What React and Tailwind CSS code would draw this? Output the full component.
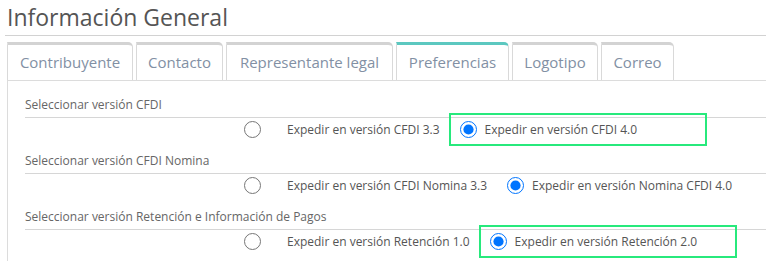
import React from "react";

function Radio({ checked }) {
  return (
    <input
      type="radio"
      checked={checked}
      readOnly
      className="m-0 h-[17px] w-[17px] shrink-0"
    />
  );
}

function Section({ label, opt1, opt2, second, boxed, first }) {
  return (
    <div className={first ? "" : "mt-[11px]"}>
      <div className="border-b border-[#d6d6d6] pb-[4px] text-[12px] leading-[17px] text-[#666]">
        {label}
      </div>
      <div className="flex h-[23px] items-center text-[12px] text-[#555]">
        <div className="ml-[219px] mr-[26px] flex">
          <Radio checked={false} />
        </div>
        <span className="mr-[20px] whitespace-nowrap">{opt1}</span>
        <div className="relative flex items-center">
          {boxed && (
            <div className="pointer-events-none absolute left-[-11px] top-[-8px] h-[33px] w-[258px] border-2 border-[#27e97c]" />
          )}
          <div className="mr-[8px] flex">
            <Radio checked={true} />
          </div>
          <span className="whitespace-nowrap">{second}</span>
        </div>
      </div>
    </div>
  );
}

const tabs = [
  { name: "Contribuyente", w: "w-[126px]" },
  { name: "Contacto", w: "w-[87px]" },
  { name: "Representante legal", w: "w-[167px]" },
  { name: "Preferencias", w: "w-[113px]", active: true },
  { name: "Logotipo", w: "w-[86px]" },
  { name: "Correo", w: "w-[73px]" },
];

export default function App() {
  return (
    <div
      className="relative h-[261px] w-[766px] overflow-hidden bg-white"
      style={{ fontFamily: "'Open Sans', 'DejaVu Sans', sans-serif" }}
    >
      <div className="h-[35px] pl-[7px] pt-[1px] text-[23px] leading-[32px] text-[#555]">
        Información General
      </div>
      <div className="ml-[5px] border-t border-[#d2d2d2]" />
      <div className="ml-[7px] mt-[6px] flex gap-[3px] border-b border-[#dcdcdc]">
        {tabs.map((t) => (
          <div
            key={t.name}
            className={`${t.w} flex h-[38px] items-center justify-center rounded-tr-[5px] border-x border-t-[3px] border-x-[#d9d9d9] text-[15px] text-[#8290a4] ${
              t.active ? "border-t-[#5cc8c0]" : "border-t-[#d3d3d3]"
            }`}
          >
            <span className="pb-[1px]">{t.name}</span>
          </div>
        ))}
      </div>
      <div className="ml-[7px] h-[200px] border-l border-[#dcdcdc] pl-[17px] pt-[15px]">
        <Section
          first
          label="Seleccionar versión CFDI"
          opt1="Expedir en versión CFDI 3.3"
          second="Expedir en versión CFDI 4.0"
          boxed
        />
        <Section
          label="Seleccionar versión CFDI Nomina"
          opt1="Expedir en versión CFDI Nomina 3.3"
          second="Expedir en versión Nomina CFDI 4.0"
        />
        <Section
          label="Seleccionar versión Retención e Información de Pagos"
          opt1="Expedir en versión Retención 1.0"
          second="Expedir en versión Retención 2.0"
          boxed
        />
      </div>
    </div>
  );
}
